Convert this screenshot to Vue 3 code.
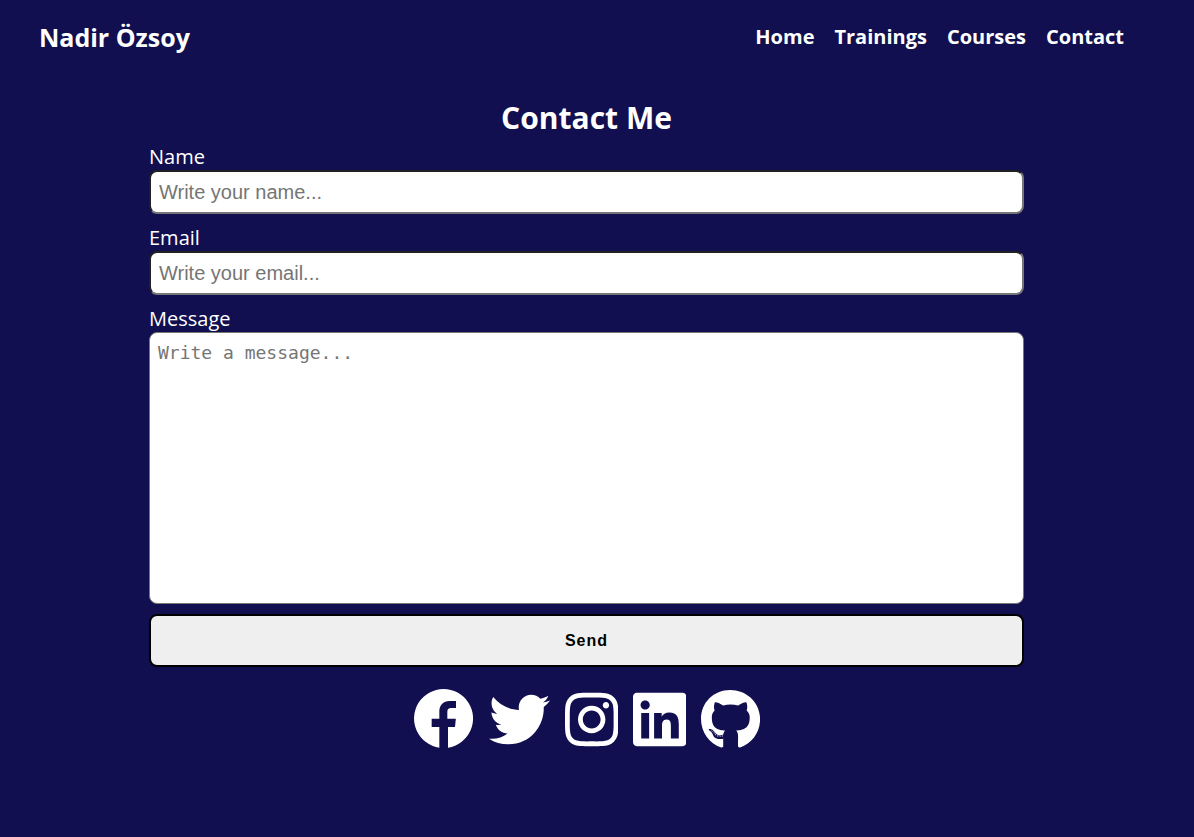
<script setup>
import { reactive } from 'vue'

const links = ['Home', 'Trainings', 'Courses', 'Contact']
const form = reactive({ name: '', email: '', message: '' })

const socials = [
  {
    name: 'Facebook',
    viewBox: '36 30 183 183',
    path: 'M115 206.1A88.5 88.5 0 1 1 141 206V144H162L164.500 119H139V98Q139 87 150 87H165V66H146C126 66 115 79 115 97V119H92V144H115Z',
  },
  {
    name: 'Twitter',
    viewBox: '0 0 512 512',
    path: 'M459.37 151.716c.325 4.548.325 9.097.325 13.645 0 138.72-105.583 298.558-298.558 298.558-59.452 0-114.68-17.219-161.137-47.106 8.447.974 16.568 1.299 25.34 1.299 49.055 0 94.213-16.568 130.274-44.832-46.132-.975-84.792-31.188-98.112-72.772 6.498.974 12.995 1.624 19.818 1.624 9.421 0 18.843-1.3 27.614-3.573-48.081-9.747-84.143-51.98-84.143-102.985v-1.299c13.969 7.797 30.214 12.67 47.431 13.319-28.264-18.843-46.781-51.005-46.781-87.391 0-19.492 5.197-37.36 14.294-52.954 51.655 63.675 129.3 105.258 216.365 109.807-1.624-7.797-2.599-15.918-2.599-24.04 0-57.828 46.782-104.934 104.934-104.934 30.213 0 57.502 12.67 76.67 33.137 23.715-4.548 46.456-13.32 66.599-25.34-7.798 24.366-24.366 44.833-46.132 57.827 21.117-2.273 41.584-8.122 60.426-16.243-14.292 20.791-32.161 39.308-52.628 54.253z',
  },
  {
    name: 'Instagram',
    viewBox: '0 0 448 512',
    path: 'M224.1 141c-63.6 0-114.9 51.3-114.9 114.9s51.3 114.9 114.9 114.9S339 319.5 339 255.9 287.7 141 224.1 141zm0 189.6c-41.1 0-74.7-33.5-74.7-74.7s33.5-74.7 74.7-74.7 74.7 33.5 74.7 74.7-33.6 74.7-74.7 74.7zm146.4-194.3c0 14.9-12 26.8-26.8 26.8-14.9 0-26.8-12-26.8-26.8s12-26.8 26.8-26.8 26.8 12 26.8 26.8zm76.1 27.2c-1.7-35.9-9.9-67.7-36.2-93.9-26.2-26.2-58-34.4-93.9-36.2-37-2.1-147.9-2.1-184.9 0-35.8 1.7-67.6 9.9-93.9 36.1s-34.4 58-36.2 93.9c-2.1 37-2.1 147.9 0 184.9 1.7 35.9 9.9 67.7 36.2 93.9s58 34.4 93.9 36.2c37 2.1 147.9 2.1 184.9 0 35.9-1.7 67.7-9.9 93.9-36.2 26.2-26.2 34.4-58 36.2-93.9 2.1-37 2.1-147.8 0-184.8zM398.8 388c-7.8 19.6-22.9 34.7-42.6 42.6-29.5 11.7-99.5 9-132.1 9s-102.7 2.6-132.1-9c-19.6-7.8-34.7-22.9-42.6-42.6-11.7-29.5-9-99.5-9-132.1s-2.6-102.7 9-132.1c7.8-19.6 22.9-34.7 42.6-42.6 29.5-11.7 99.5-9 132.1-9s102.7-2.6 132.1 9c19.6 7.8 34.7 22.9 42.6 42.6 11.7 29.5 9 99.5 9 132.1s2.7 102.7-9 132.1z',
  },
  {
    name: 'LinkedIn',
    viewBox: '0 0 448 512',
    path: 'M416 32H31.9C14.3 32 0 46.5 0 64.3v383.4C0 465.5 14.3 480 31.9 480H416c17.6 0 32-14.5 32-32.3V64.3c0-17.8-14.4-32.3-32-32.3zM135.4 416H69V202.2h66.5V416zm-33.2-243c-21.3 0-38.5-17.3-38.5-38.5S80.9 96 102.2 96c21.2 0 38.5 17.3 38.5 38.5 0 21.3-17.2 38.5-38.5 38.5zm282.1 243h-66.4V312c0-24.8-.5-56.7-34.5-56.7-34.6 0-39.9 27-39.9 54.9V416h-66.4V202.2h63.7v29.2h.9c8.9-16.8 30.6-34.5 62.9-34.5 67.2 0 79.7 44.3 79.7 101.9V416z',
  },
  {
    name: 'GitHub',
    viewBox: '0 0 496 512',
    path: 'M165.9 397.4c0 2-2.3 3.6-5.2 3.6-3.3.3-5.6-1.3-5.6-3.6 0-2 2.3-3.6 5.2-3.6 3-.3 5.6 1.3 5.6 3.6zm-31.1-4.5c-.7 2 1.3 4.3 4.3 4.9 2.6 1 5.6 0 6.2-2s-1.3-4.3-4.3-5.2c-2.6-.7-5.5.3-6.2 2.3zm44.2-1.7c-2.9.7-4.9 2.6-4.6 4.9.3 2 2.9 3.3 5.9 2.6 2.9-.7 4.9-2.6 4.6-4.6-.3-1.9-3-3.2-5.9-2.9zM244.8 8C106.1 8 0 113.3 0 252c0 110.9 69.8 205.8 169.5 239.2 12.8 2.3 17.3-5.6 17.3-12.1 0-6.2-.3-40.4-.3-61.4 0 0-70 15-84.7-29.8 0 0-11.4-29.1-27.8-36.6 0 0-22.9-15.7 1.6-15.4 0 0 24.9 2 38.6 25.8 21.9 38.6 58.6 27.5 72.9 20.9 2.3-16 8.8-27.1 16-33.7-55.9-6.2-112.3-14.3-112.3-110.5 0-27.5 7.6-41.3 23.6-58.9-2.6-6.5-11.1-33.3 2.6-67.9 20.9-6.5 69 27 69 27 20-5.6 41.5-8.5 62.8-8.5s42.8 2.9 62.8 8.5c0 0 48.1-33.6 69-27 13.7 34.7 5.2 61.4 2.6 67.9 16 17.7 25.8 31.5 25.8 58.9 0 96.5-58.9 104.2-114.8 110.5 9.2 7.9 17 22.9 17 46.4 0 33.7-.3 75.4-.3 83.6 0 6.5 4.6 14.4 17.3 12.1C428.2 457.8 496 362.9 496 252 496 113.3 383.5 8 244.8 8zM97.2 352.9c-1.3 1-1 3.3.7 5.2 1.6 1.6 3.9 2.3 5.2 1 1.3-1 1-3.3-.7-5.2-1.6-1.6-3.9-2.3-5.2-1zm-10.8-8.1c-.7 1.3.3 2.9 2.3 3.9 1.6 1 3.6.7 4.3-.7.7-1.3-.3-2.9-2.3-3.9-2-.6-3.6-.3-4.3.7zm32.4 35.6c-1.6 1.3-1 4.3 1.3 6.2 2.3 2.3 5.2 2.6 6.5 1 1.3-1.3.7-4.3-1.3-6.2-2.2-2.3-5.2-2.6-6.5-1zm-11.4-14.7c-1.6 1-1.6 3.6 0 5.9 1.6 2.3 4.3 3.3 5.6 2.3 1.6-1.3 1.6-3.9 0-6.2-1.4-2.3-4-3.3-5.6-2z',
  },
]
</script>

<template>
  <div class="page">
    <header class="header">
      <h1 class="brand">Nadir Özsoy</h1>
      <nav class="nav">
        <a v-for="link in links" :key="link" :href="'#' + link.toLowerCase()">{{ link }}</a>
      </nav>
    </header>

    <main id="contact" class="contact">
      <h2 class="title">Contact Me</h2>
      <form class="form" @submit.prevent>
        <div class="field">
          <label for="name">Name</label>
          <input id="name" v-model="form.name" type="text" placeholder="Write your name..." />
        </div>
        <div class="field">
          <label for="email">Email</label>
          <input id="email" v-model="form.email" type="email" placeholder="Write your email..." />
        </div>
        <div class="field">
          <label for="message">Message</label>
          <textarea id="message" v-model="form.message" rows="11" placeholder="Write a message..."></textarea>
        </div>
        <button class="send" type="submit">Send</button>
      </form>

      <div class="socials">
        <a v-for="s in socials" :key="s.name" :href="'#' + s.name.toLowerCase()" :aria-label="s.name">
          <svg :viewBox="s.viewBox" aria-hidden="true"><path :d="s.path" /></svg>
        </a>
      </div>
    </main>
  </div>
</template>

<style>
body {
  background: #110f4f;
}
</style>

<style scoped>
.page {
  box-sizing: border-box;
  min-height: 100vh;
  padding-right: 21px;
  color: #fff;
  font-family: "Open Sans", "Noto Sans", sans-serif;
  font-size: 20px;
}

.header {
  display: flex;
  align-items: center;
  justify-content: space-between;
  padding: 20px 49px 20px 39px;
}

.brand {
  margin: 0;
  font-size: 25px;
  line-height: 34px;
}

.nav {
  display: flex;
  gap: 20px;
}

.nav a {
  color: inherit;
  font-weight: 700;
  line-height: 34px;
  text-decoration: none;
}

.contact {
  max-width: 875px;
  margin: 0 auto;
  padding: 23px 16px 80px;
}

.title {
  margin: 0 0 5px;
  font-size: 30px;
  line-height: 41px;
  text-align: center;
}

.form,
.field {
  display: flex;
  flex-direction: column;
}

.form {
  gap: 10px;
}

label {
  line-height: 27px;
}

input,
textarea {
  box-sizing: border-box;
  width: 100%;
  margin: 0;
  padding: 8px;
  border-radius: 8px;
  background: #fff;
  color: #000;
  line-height: 24px;
}

input {
  height: 44px;
  border: 2px inset #767676;
  font-family: "Liberation Sans", Arial, sans-serif;
  font-size: 20px;
}

textarea {
  height: 272px;
  border: 1px solid #767676;
  font-family: "DejaVu Sans Mono", monospace;
  font-size: 18px;
  resize: none;
}

input::placeholder,
textarea::placeholder {
  color: #757575;
}

.send {
  height: 53px;
  border: 2px solid #000;
  border-radius: 8px;
  background: #efefef;
  color: #000;
  font-family: "Liberation Sans", Arial, sans-serif;
  font-size: 16px;
  font-weight: 700;
  letter-spacing: 1px;
}

.socials {
  display: flex;
  justify-content: center;
  gap: 15px;
  margin-top: 22px;
}

.socials svg {
  display: block;
  height: 61px;
  fill: #fff;
}
</style>
